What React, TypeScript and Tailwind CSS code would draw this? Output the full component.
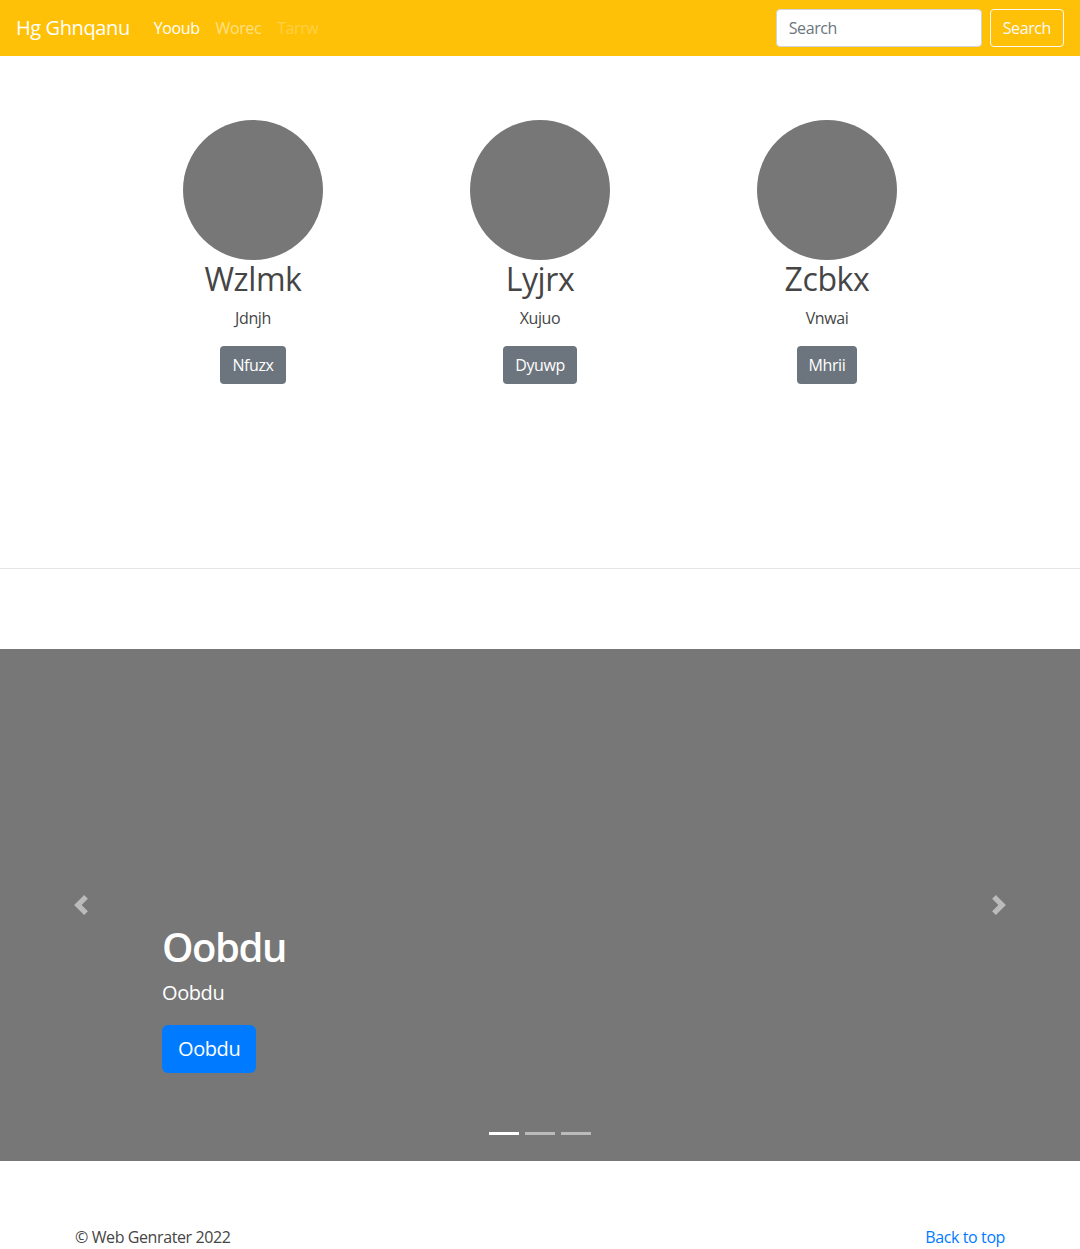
const team = [
  { name: 'Wzlmk', sub: 'Jdnjh', btn: 'Nfuzx' },
  { name: 'Lyjrx', sub: 'Xujuo', btn: 'Dyuwp' },
  { name: 'Zcbkx', sub: 'Vnwai', btn: 'Mhrii' },
];

function PrevIcon() {
  return (
    <svg viewBox="0 0 8 8" className="w-5 h-5 fill-white opacity-50">
      <path d="M5.25 0l-4 4 4 4 1.5-1.5L4.25 4l2.5-2.5L5.25 0z" />
    </svg>
  );
}

function NextIcon() {
  return (
    <svg viewBox="0 0 8 8" className="w-5 h-5 fill-white opacity-50">
      <path d="M2.75 0l-1.5 1.5L3.75 4l-2.5 2.5L2.75 8l4-4-4-4z" />
    </svg>
  );
}

export default function App() {
  return (
    <div className="min-h-screen bg-white text-[#454545] font-['Open_Sans',sans-serif] text-base leading-6 tracking-[-0.025em]">
      {/* navbar */}
      <nav className="h-14 bg-[#ffc107] flex items-center px-4">
        <span className="text-white text-xl leading-[30px] mr-4">Hg Ghnqanu</span>
        <div className="flex items-center">
          <span className="px-2 text-white">Yooub</span>
          <span className="px-2 text-white/50">Worec</span>
          <span className="px-2 text-white/25">Tarrw</span>
        </div>
        <div className="ml-auto flex items-center">
          <input
            placeholder="Search"
            className="w-[206px] h-[38px] px-3 bg-white border border-[#ced4da] rounded text-base text-[#495057] placeholder:text-[#6c757d] outline-none mr-2 tracking-[-0.025em]"
          />
          <button className="h-[38px] px-3 border border-[#f8f9fa] rounded text-[#f8f9fa]">Search</button>
        </div>
      </nav>

      {/* marketing */}
      <div className="w-[861px] mx-auto mt-16 grid grid-cols-3">
        {team.map((t) => (
          <div key={t.name} className="flex flex-col items-center mb-6">
            <div className="w-[140px] h-[140px] rounded-full bg-[#777]" />
            <h2 className="text-[32px] leading-[38px] font-normal mb-2">{t.name}</h2>
            <p className="mb-4">{t.sub}</p>
            <button className="h-[38px] px-3 rounded bg-[#6c757d] text-white">{t.btn}</button>
          </div>
        ))}
      </div>

      <hr className="mt-[160px] border-t border-black/10" />

      {/* carousel */}
      <div className="relative mt-20 h-[512px] bg-[#777]">
        <div className="absolute left-0 top-0 bottom-0 w-[15%] flex items-center justify-center">
          <PrevIcon />
        </div>
        <div className="absolute right-0 top-0 bottom-0 w-[15%] flex items-center justify-center">
          <NextIcon />
        </div>
        <div className="absolute left-[15%] right-[15%] bottom-[88px] text-white">
          <h1 className="text-[40px] leading-[48px] font-semibold mb-2 tracking-[-0.035em]">Oobdu</h1>
          <p className="text-xl leading-[28px] mb-[18px]">Oobdu</p>
          <button className="h-12 px-4 rounded-md bg-[#007bff] text-white text-xl">Oobdu</button>
        </div>
        <div className="absolute left-0 right-0 bottom-[26px] flex justify-center gap-1.5">
          <span className="w-[30px] h-[3px] bg-white" />
          <span className="w-[30px] h-[3px] bg-white/50" />
          <span className="w-[30px] h-[3px] bg-white/50" />
        </div>
      </div>

      {/* footer */}
      <footer className="w-[960px] mx-auto px-[15px] mt-16 flex justify-between pb-4">
        <p>© Web Genrater 2022</p>
        <a className="text-[#007bff]">Back to top</a>
      </footer>
    </div>
  );
}
